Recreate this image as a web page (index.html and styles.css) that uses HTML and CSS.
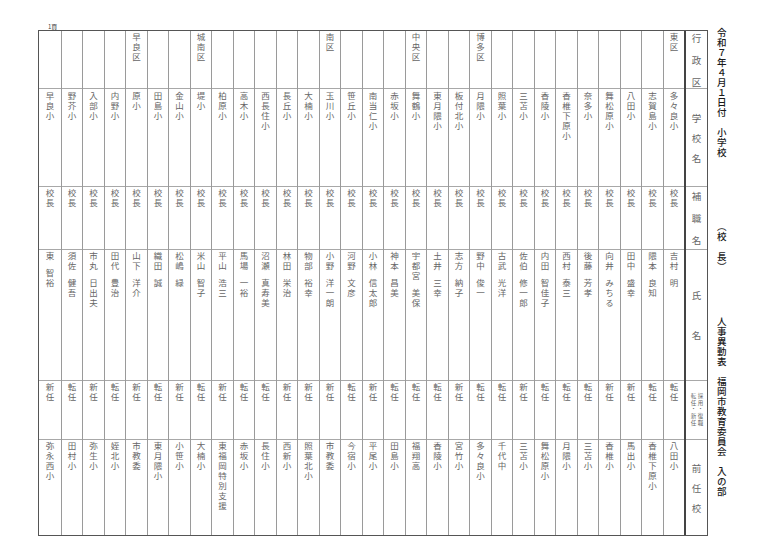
FILE: index.html
```html
<!DOCTYPE html>
<html lang="ja">
<head>
<meta charset="utf-8">
<title>人事異動表 小学校 校長</title>
<link rel="stylesheet" href="styles.css">
</head>
<body>
<div class="page">
  <div class="sheet">
    <div class="page-no">1頁</div>
    <div class="table">
      <div class="head">
        <div class="hcell gap12"><span>行</span><span>政</span><span>区</span></div>
        <div class="hcell gap10"><span>学</span><span>校</span><span>名</span></div>
        <div class="hcell gap12"><span>補</span><span>職</span><span>名</span></div>
        <div class="hcell gap30"><span>氏</span><span>名</span></div>
        <div class="hcell"><span class="v small">採用・復職<br>転任・新任</span></div>
        <div class="hcell gap10"><span>前</span><span>任</span><span>校</span></div>
      </div>

      <div class="col"><div class="cell"><span class="v">東区</span></div><div class="cell school"><span class="v">多々良小</span></div><div class="cell"><span class="v">校長</span></div><div class="cell"><span class="v">吉村<span class="given">明</span></span></div><div class="cell"><span class="v">転任</span></div><div class="cell"><span class="v">八田小</span></div></div>
      <div class="col"><div class="cell"></div><div class="cell school"><span class="v">志賀島小</span></div><div class="cell"><span class="v">校長</span></div><div class="cell"><span class="v">隈本<span class="given">良知</span></span></div><div class="cell"><span class="v">転任</span></div><div class="cell"><span class="v">香椎下原小</span></div></div>
      <div class="col"><div class="cell"></div><div class="cell school"><span class="v">八田小</span></div><div class="cell"><span class="v">校長</span></div><div class="cell"><span class="v">田中<span class="given">盛幸</span></span></div><div class="cell"><span class="v">新任</span></div><div class="cell"><span class="v">馬出小</span></div></div>
      <div class="col"><div class="cell"></div><div class="cell school"><span class="v">舞松原小</span></div><div class="cell"><span class="v">校長</span></div><div class="cell"><span class="v">向井<span class="given">みちる</span></span></div><div class="cell"><span class="v">新任</span></div><div class="cell"><span class="v">香椎小</span></div></div>
      <div class="col"><div class="cell"></div><div class="cell school"><span class="v">奈多小</span></div><div class="cell"><span class="v">校長</span></div><div class="cell"><span class="v">後藤<span class="given">芳孝</span></span></div><div class="cell"><span class="v">転任</span></div><div class="cell"><span class="v">三苫小</span></div></div>
      <div class="col"><div class="cell"></div><div class="cell school"><span class="v">香椎下原小</span></div><div class="cell"><span class="v">校長</span></div><div class="cell"><span class="v">西村<span class="given">泰三</span></span></div><div class="cell"><span class="v">転任</span></div><div class="cell"><span class="v">月隈小</span></div></div>
      <div class="col"><div class="cell"></div><div class="cell school"><span class="v">香陵小</span></div><div class="cell"><span class="v">校長</span></div><div class="cell"><span class="v">内田<span class="given">智佳子</span></span></div><div class="cell"><span class="v">転任</span></div><div class="cell"><span class="v">舞松原小</span></div></div>
      <div class="col"><div class="cell"></div><div class="cell school"><span class="v">三苫小</span></div><div class="cell"><span class="v">校長</span></div><div class="cell"><span class="v">佐伯<span class="given">修一郎</span></span></div><div class="cell"><span class="v">新任</span></div><div class="cell"><span class="v">三苫小</span></div></div>
      <div class="col"><div class="cell"></div><div class="cell school"><span class="v">照葉小</span></div><div class="cell"><span class="v">校長</span></div><div class="cell"><span class="v">古武<span class="given">光洋</span></span></div><div class="cell"><span class="v">転任</span></div><div class="cell"><span class="v">千代中</span></div></div>
      <div class="col"><div class="cell"><span class="v">博多区</span></div><div class="cell school"><span class="v">月隈小</span></div><div class="cell"><span class="v">校長</span></div><div class="cell"><span class="v">野中<span class="given">俊一</span></span></div><div class="cell"><span class="v">転任</span></div><div class="cell"><span class="v">多々良小</span></div></div>
      <div class="col"><div class="cell"></div><div class="cell school"><span class="v">板付北小</span></div><div class="cell"><span class="v">校長</span></div><div class="cell"><span class="v">志方<span class="given">納子</span></span></div><div class="cell"><span class="v">新任</span></div><div class="cell"><span class="v">宮竹小</span></div></div>
      <div class="col"><div class="cell"></div><div class="cell school"><span class="v">東月隈小</span></div><div class="cell"><span class="v">校長</span></div><div class="cell"><span class="v">土井<span class="given">三幸</span></span></div><div class="cell"><span class="v">転任</span></div><div class="cell"><span class="v">香陵小</span></div></div>
      <div class="col"><div class="cell"><span class="v">中央区</span></div><div class="cell school"><span class="v">舞鶴小</span></div><div class="cell"><span class="v">校長</span></div><div class="cell"><span class="v">宇都宮<span class="given">美保</span></span></div><div class="cell"><span class="v">転任</span></div><div class="cell"><span class="v">福翔高</span></div></div>
      <div class="col"><div class="cell"></div><div class="cell school"><span class="v">赤坂小</span></div><div class="cell"><span class="v">校長</span></div><div class="cell"><span class="v">神本<span class="given">昌美</span></span></div><div class="cell"><span class="v">転任</span></div><div class="cell"><span class="v">田島小</span></div></div>
      <div class="col"><div class="cell"></div><div class="cell school"><span class="v">南当仁小</span></div><div class="cell"><span class="v">校長</span></div><div class="cell"><span class="v">小林<span class="given">信太郎</span></span></div><div class="cell"><span class="v">新任</span></div><div class="cell"><span class="v">平尾小</span></div></div>
      <div class="col"><div class="cell"></div><div class="cell school"><span class="v">笹丘小</span></div><div class="cell"><span class="v">校長</span></div><div class="cell"><span class="v">河野<span class="given">文彦</span></span></div><div class="cell"><span class="v">転任</span></div><div class="cell"><span class="v">今宿小</span></div></div>
      <div class="col"><div class="cell"><span class="v">南区</span></div><div class="cell school"><span class="v">玉川小</span></div><div class="cell"><span class="v">校長</span></div><div class="cell"><span class="v">小野<span class="given">洋一朗</span></span></div><div class="cell"><span class="v">新任</span></div><div class="cell"><span class="v">市教委</span></div></div>
      <div class="col"><div class="cell"></div><div class="cell school"><span class="v">大楠小</span></div><div class="cell"><span class="v">校長</span></div><div class="cell"><span class="v">物部<span class="given">裕幸</span></span></div><div class="cell"><span class="v">新任</span></div><div class="cell"><span class="v">照葉北小</span></div></div>
      <div class="col"><div class="cell"></div><div class="cell school"><span class="v">長丘小</span></div><div class="cell"><span class="v">校長</span></div><div class="cell"><span class="v">林田<span class="given">栄治</span></span></div><div class="cell"><span class="v">新任</span></div><div class="cell"><span class="v">西新小</span></div></div>
      <div class="col"><div class="cell"></div><div class="cell school"><span class="v">西長住小</span></div><div class="cell"><span class="v">校長</span></div><div class="cell"><span class="v">沼瀬<span class="given">真寿美</span></span></div><div class="cell"><span class="v">転任</span></div><div class="cell"><span class="v">長住小</span></div></div>
      <div class="col"><div class="cell"></div><div class="cell school"><span class="v">高木小</span></div><div class="cell"><span class="v">校長</span></div><div class="cell"><span class="v">馬場<span class="given">一裕</span></span></div><div class="cell"><span class="v">転任</span></div><div class="cell"><span class="v">赤坂小</span></div></div>
      <div class="col"><div class="cell"></div><div class="cell school"><span class="v">柏原小</span></div><div class="cell"><span class="v">校長</span></div><div class="cell"><span class="v">平山<span class="given">浩三</span></span></div><div class="cell"><span class="v">新任</span></div><div class="cell"><span class="v">東福岡特別支援</span></div></div>
      <div class="col"><div class="cell"><span class="v">城南区</span></div><div class="cell school"><span class="v">堤小</span></div><div class="cell"><span class="v">校長</span></div><div class="cell"><span class="v">米山<span class="given">智子</span></span></div><div class="cell"><span class="v">転任</span></div><div class="cell"><span class="v">大楠小</span></div></div>
      <div class="col"><div class="cell"></div><div class="cell school"><span class="v">金山小</span></div><div class="cell"><span class="v">校長</span></div><div class="cell"><span class="v">松嶋<span class="given">緑</span></span></div><div class="cell"><span class="v">新任</span></div><div class="cell"><span class="v">小笹小</span></div></div>
      <div class="col"><div class="cell"></div><div class="cell school"><span class="v">田島小</span></div><div class="cell"><span class="v">校長</span></div><div class="cell"><span class="v">織田<span class="given">誠</span></span></div><div class="cell"><span class="v">転任</span></div><div class="cell"><span class="v">東月隈小</span></div></div>
      <div class="col"><div class="cell"><span class="v">早良区</span></div><div class="cell school"><span class="v">原小</span></div><div class="cell"><span class="v">校長</span></div><div class="cell"><span class="v">山下<span class="given">洋介</span></span></div><div class="cell"><span class="v">新任</span></div><div class="cell"><span class="v">市教委</span></div></div>
      <div class="col"><div class="cell"></div><div class="cell school"><span class="v">内野小</span></div><div class="cell"><span class="v">校長</span></div><div class="cell"><span class="v">田代<span class="given">豊治</span></span></div><div class="cell"><span class="v">転任</span></div><div class="cell"><span class="v">姪北小</span></div></div>
      <div class="col"><div class="cell"></div><div class="cell school"><span class="v">入部小</span></div><div class="cell"><span class="v">校長</span></div><div class="cell"><span class="v">市丸<span class="given">日出夫</span></span></div><div class="cell"><span class="v">新任</span></div><div class="cell"><span class="v">弥生小</span></div></div>
      <div class="col"><div class="cell"></div><div class="cell school"><span class="v">野芥小</span></div><div class="cell"><span class="v">校長</span></div><div class="cell"><span class="v">須佐<span class="given">健吾</span></span></div><div class="cell"><span class="v">転任</span></div><div class="cell"><span class="v">田村小</span></div></div>
      <div class="col"><div class="cell"></div><div class="cell school"><span class="v">早良小</span></div><div class="cell"><span class="v">校長</span></div><div class="cell"><span class="v">東<span class="given">智裕</span></span></div><div class="cell"><span class="v">新任</span></div><div class="cell"><span class="v">弥永西小</span></div></div>
    </div>
  </div>
  <div class="title">
    <span class="seg seg1">令和７年４月１日付　小学校</span>
    <span class="seg seg2">（校　長）</span>
    <span class="seg seg3">人事異動表　福岡市教育委員会　入の部</span>
  </div>
</div>
</body>
</html>
```

FILE: styles.css
```css
* {
  box-sizing: border-box;
  margin: 0;
  padding: 0;
}

html,
body {
  background: #ffffff;
}

body {
  font-family: "Noto Sans CJK JP", sans-serif;
  color: #666;
}

.page {
  display: flex;
  align-items: flex-start;
  padding: 23px 0 0 38px;
}

.sheet {
  display: flex;
  flex-direction: column;
}

.page-no {
  height: 7px;
  font-size: 6px;
  line-height: 7px;
  margin-left: 10px;
  color: #444;
}

.table {
  display: flex;
  flex-direction: row-reverse;
  border: 1px solid #555;
}

.col,
.head {
  display: grid;
  grid-template-rows: 58px 98px 63px 131px 59px 95px;
}

.col {
  width: 21.5px;
  border-left: 1px solid #9a9a9a;
}

.col:last-child {
  border-left: none;
}

.head {
  width: 23px;
  border-left: 2px solid #444;
}

.cell {
  display: flex;
  justify-content: center;
  padding-top: 2px;
  border-bottom: 1px solid #a8a8a8;
}

.cell:last-child,
.hcell:last-child {
  border-bottom: none;
}

.cell.school {
  padding-top: 3px;
}

.v {
  writing-mode: vertical-rl;
  font-size: 8.5px;
  line-height: 1;
  letter-spacing: 1.5px;
  white-space: nowrap;
}

.given {
  margin-inline-start: 7px;
}

.hcell {
  display: flex;
  flex-direction: column;
  align-items: center;
  justify-content: center;
  font-size: 9.5px;
  line-height: 10px;
  border-bottom: 1px solid #a8a8a8;
}

.gap10 {
  gap: 10px;
}

.gap12 {
  gap: 12px;
}

.gap30 {
  gap: 30px;
}

.v.small {
  font-size: 5.5px;
  line-height: 7px;
  letter-spacing: 1.3px;
}

.title {
  display: flex;
  flex-direction: column;
  align-items: center;
  width: 12px;
  margin-left: 7px;
  color: #1a1a1a;
  font-weight: 500;
}

.seg {
  writing-mode: vertical-rl;
  text-orientation: upright;
  font-size: 9.5px;
  line-height: 1;
  letter-spacing: 0.5px;
  white-space: nowrap;
}

.seg1 {
  margin-top: 5px;
}

.seg2 {
  margin-top: 64px;
}

.seg3 {
  margin-top: 45px;
}
```
